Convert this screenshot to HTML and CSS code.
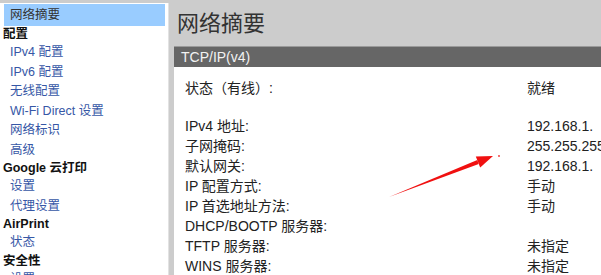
FILE: index.html
```html
<!DOCTYPE html>
<html lang="zh-CN">
<head>
    <meta charset="UTF-8">
    <title>网络摘要</title>
    <link rel="stylesheet" href="styles.css">
</head>
<body>
    <div class="page">
        <div class="sidebar">
            <div class="nav-item active">网络摘要</div>
            <div class="nav-head">配置</div>
            <a class="nav-item">IPv4 配置</a>
            <a class="nav-item">IPv6 配置</a>
            <a class="nav-item">无线配置</a>
            <a class="nav-item">Wi-Fi Direct 设置</a>
            <a class="nav-item">网络标识</a>
            <a class="nav-item">高级</a>
            <div class="nav-head">Google 云打印</div>
            <a class="nav-item">设置</a>
            <a class="nav-item">代理设置</a>
            <div class="nav-head">AirPrint</div>
            <a class="nav-item">状态</a>
            <div class="nav-head">安全性</div>
            <a class="nav-item">设置</a>
        </div>

        <div class="main">
            <h1 class="title">网络摘要</h1>
            <div class="panel">
                <div class="panel-head">TCP/IP(v4)</div>
                <div class="panel-body">
                    <div class="row"><span>状态（有线）:</span><span>就绪</span></div>
                    <div class="spacer"></div>
                    <div class="row"><span>IPv4 地址:</span><span>192.168.1.</span></div>
                    <div class="row"><span>子网掩码:</span><span>255.255.255.0</span></div>
                    <div class="row"><span>默认网关:</span><span>192.168.1.</span></div>
                    <div class="row"><span>IP 配置方式:</span><span>手动</span></div>
                    <div class="row"><span>IP 首选地址方法:</span><span>手动</span></div>
                    <div class="row"><span>DHCP/BOOTP 服务器:</span><span></span></div>
                    <div class="row"><span>TFTP 服务器:</span><span>未指定</span></div>
                    <div class="row"><span>WINS 服务器:</span><span>未指定</span></div>
                </div>
            </div>
        </div>
    </div>

    <!-- annotation arrow drawn over the page -->
    <svg class="arrow" width="601" height="275" viewBox="0 0 601 275">
        <polygon points="389,197 477.3,160.1 478.7,163.9" fill="#f01010" />
        <polygon points="493,156 475.8,156.4 480.2,167.6" fill="#f01010" />
        <circle cx="499" cy="156" r="0.9" fill="#f03030" />
    </svg>
</body>
</html>
```

FILE: styles.css
```css
body {
    margin: 0;
    background: #cccccc;
    font-family: "Liberation Sans", "Noto Sans CJK SC", sans-serif;
    overflow: hidden;
}

.page {
    display: flex;
    height: 275px;
    overflow: hidden;
}

.sidebar {
    width: 162px;
    flex: none;
    margin-top: 3px;
    padding: 1px 3px 0 3px;
    background: #fff;
    border-right: 1px solid #e2e2e2;
    font-size: 12.5px;
}

.nav-item {
    display: block;
    height: 19.5px;
    line-height: 19.5px;
    padding-left: 7px;
    color: #3657a6;
    white-space: nowrap;
}

.nav-item.active {
    height: 22px;
    line-height: 22px;
    margin-left: 1px;
    padding-left: 6px;
    background: #99ccff;
    color: #333;
}

.nav-head {
    height: 17px;
    line-height: 17px;
    font-weight: bold;
    color: #111;
    white-space: nowrap;
}

.main {
    flex: 1;
    padding-left: 5px;
    min-width: 0;
}

.title {
    margin: 11px 0 9px 3px;
    height: 26px;
    line-height: 26px;
    font-size: 22px;
    font-weight: normal;
    color: #333;
}

.panel {
    background: #fff;
    border-top: 1px solid #9a9a9a;
    height: 300px;
}

.panel-head {
    height: 20px;
    line-height: 20px;
    padding-left: 7px;
    background: #666666;
    color: #f2f2f2;
    font-size: 14px;
}

.panel-body {
    padding: 11px 0 0 11px;
    font-size: 14px;
    color: #222;
}

.row {
    display: grid;
    grid-template-columns: 342px auto;
    height: 20px;
    line-height: 20px;
    white-space: nowrap;
}

.spacer {
    height: 18px;
}

.arrow {
    position: absolute;
    left: 0;
    top: 0;
    pointer-events: none;
}
```
